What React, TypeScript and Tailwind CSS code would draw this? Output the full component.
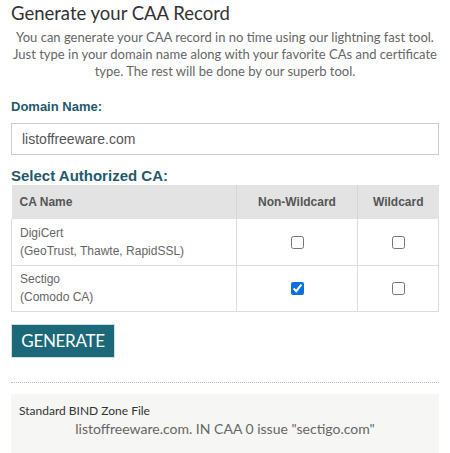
export default function App() {
  const rows = [
    { name: 'DigiCert', sub: '(GeoTrust, Thawte, RapidSSL)', nw: false, w: false },
    { name: 'Sectigo', sub: '(Comodo CA)', nw: true, w: false },
  ];

  return (
    <div className="w-[450px] h-[453px] overflow-hidden bg-white px-[11px]" style={{ fontFamily: 'Lato, sans-serif' }}>
      <h1 className="text-[18.5px] leading-[26px] text-[#333] font-normal">Generate your CAA Record</h1>
      <p className="mt-[3px] text-center text-[13px] leading-[17px] text-[#666]">
        You can generate your CAA record in no time using our lightning fast tool. Just type in your domain name along with your favorite CAs and certificate type. The rest will be done by our superb tool.
      </p>

      <div style={{ fontFamily: '"Liberation Sans", Arial, sans-serif' }}>
        <label className="block mt-[19px] text-[13px] leading-[16px] font-bold text-[#1f5a6c]">Domain Name:</label>
        <input
          readOnly
          value="listoffreeware.com"
          className="mt-[8px] block w-full h-[32px] border border-[#ccc] px-[10px] text-[14px] text-[#555] outline-none"
        />

        <h2 className="mt-[12px] text-[15px] leading-[18px] font-bold text-[#1f5a6c]">Select Authorized CA:</h2>
        <table className="w-full border-collapse text-[12px] text-[#666]">
          <thead>
            <tr className="bg-[#e3e3e3] h-[34px] text-[#555]">
              <th className="text-left font-bold pl-[8px] w-[225px] border-r border-[#d6d6d6]">CA Name</th>
              <th className="font-bold w-[121px] border-r border-[#d6d6d6]">Non-Wildcard</th>
              <th className="font-bold">Wildcard</th>
            </tr>
          </thead>
          <tbody>
            {rows.map((r) => (
              <tr key={r.name} className="h-[46px] border-b border-[#ddd]">
                <td className="pl-[8px] border-l border-r border-[#ddd] leading-[18px]">
                  <div>{r.name}</div>
                  <div>{r.sub}</div>
                </td>
                <td className="text-center border-r border-[#ddd]">
                  <input type="checkbox" readOnly checked={r.nw} className="w-[13px] h-[13px] align-middle accent-[#0b6fe0]" />
                </td>
                <td className="text-center border-r border-[#ddd]">
                  <input type="checkbox" readOnly checked={r.w} className="w-[13px] h-[13px] align-middle" />
                </td>
              </tr>
            ))}
          </tbody>
        </table>
      </div>

      <button className="mt-[12px] block w-[104px] h-[34px] bg-[#1b6878] text-white text-[17px] tracking-[-0.3px] border border-[#cfdfe3]">
        GENERATE
      </button>

      <div className="mt-[24px] border-t border-dotted border-[#bbb]" />

      <div className="mt-[11px] bg-[#f6f6f4] px-[8px] pt-[9px] h-[70px]">
        <div className="text-[12px] leading-[16px] text-[#333]">Standard BIND Zone File</div>
        <div className="mt-[1px] text-center text-[14px] leading-[18px] text-[#666]">listoffreeware.com. IN CAA 0 issue "sectigo.com"</div>
      </div>
    </div>
  );
}
